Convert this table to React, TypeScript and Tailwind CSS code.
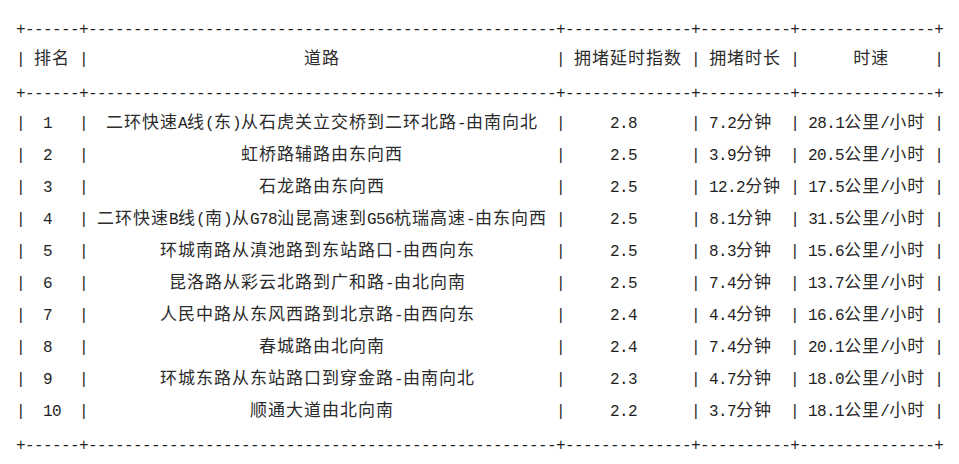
const WIDTHS = [4, 50, 12, 8, 13]
const HEADER = ['排名', '道路', '拥堵延时指数', '拥堵时长', '时速']
const ROWS = [
  ['1', '二环快速A线(东)从石虎关立交桥到二环北路-由南向北', '2.8', '7.2分钟', '28.1公里/小时'],
  ['2', '虹桥路辅路由东向西', '2.5', '3.9分钟', '20.5公里/小时'],
  ['3', '石龙路由东向西', '2.5', '12.2分钟', '17.5公里/小时'],
  ['4', '二环快速B线(南)从G78汕昆高速到G56杭瑞高速-由东向西', '2.5', '8.1分钟', '31.5公里/小时'],
  ['5', '环城南路从滇池路到东站路口-由西向东', '2.5', '8.3分钟', '15.6公里/小时'],
  ['6', '昆洛路从彩云北路到广和路-由北向南', '2.5', '7.4分钟', '13.7公里/小时'],
  ['7', '人民中路从东风西路到北京路-由西向东', '2.4', '4.4分钟', '16.6公里/小时'],
  ['8', '春城路由北向南', '2.4', '7.4分钟', '20.1公里/小时'],
  ['9', '环城东路从东站路口到穿金路-由南向北', '2.3', '4.7分钟', '18.0公里/小时'],
  ['10', '顺通大道由北向南', '2.2', '3.7分钟', '18.1公里/小时'],
]

// wide chars take two cells, like the terminal table does
const cells = (s: string) => [...s].reduce((n, ch) => n + (ch.charCodeAt(0) > 0x7f ? 2 : 1), 0)

const center = (text: string, width: number) => {
  const len = cells(text)
  const excess = width - len
  const half = Math.floor(excess / 2)
  let left = half
  let right = half
  if (excess % 2) {
    if (len % 2) right += 1
    else left += 1
  }
  return ' '.repeat(left) + text + ' '.repeat(right)
}

const border = '+' + WIDTHS.map((w) => '-'.repeat(w + 2)).join('+') + '+'
const line = (row: string[]) => '|' + row.map((c, i) => ' ' + center(c, WIDTHS[i]) + ' ').join('|') + '|'

function Line({ text, rule }: { text: string; rule?: boolean }) {
  const parts = text.match(/[\x00-\x7f]+|[^\x00-\x7f]+/g) ?? []
  return (
    <div className={`h-[32px] leading-[32px] whitespace-pre ${rule ? 'pt-[3px]' : ''}`}>
      {parts.map((p, i) =>
        p.charCodeAt(0) > 0x7f ? (
          <span key={i} className="font-['Noto_Sans_CJK_SC',sans-serif] text-[17px] tracking-[1px]">
            {p}
          </span>
        ) : (
          <span key={i} className="font-['Liberation_Mono',monospace] text-[16px] tracking-[-0.6px] text-[#1f1f1f]">
            {p}
          </span>
        )
      )}
    </div>
  )
}

export default function App() {
  return (
    <div className="min-h-screen bg-white text-[#2b2b2b] pl-[16px] pt-[9px]">
      <Line text={border} rule />
      <Line text={line(HEADER)} />
      <Line text={border} rule />
      {ROWS.map((r, i) => (
        <Line key={i} text={line(r)} />
      ))}
      <Line text={border} rule />
    </div>
  )
}
